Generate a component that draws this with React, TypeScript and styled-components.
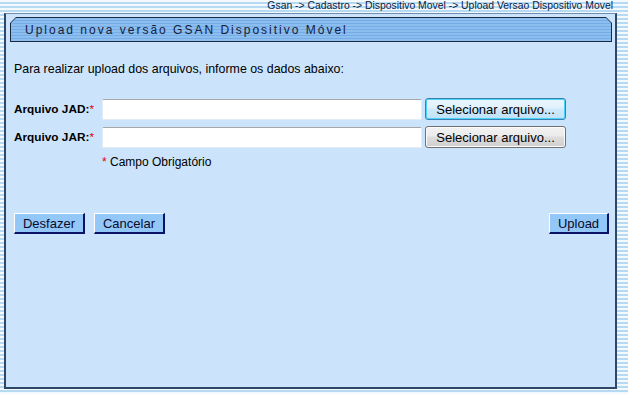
import React from "react";
import styled, { createGlobalStyle } from "styled-components";

const Global = createGlobalStyle`
  html, body { margin: 0; padding: 0; }
  body {
    width: 628px;
    height: 394px;
    overflow: hidden;
    font-family: "Liberation Sans", Arial, sans-serif;
  }
`;

const Page = styled.div`
  width: 628px;
  height: 394px;
  display: flex;
  flex-direction: column;
  background: repeating-linear-gradient(
    to bottom,
    #f4f9fd 0px,
    #f4f9fd 2px,
    #b6daf1 2px,
    #b6daf1 4px
  );
`;

const Breadcrumb = styled.div`
  height: 13px;
  padding-right: 15px;
  text-align: right;
  font-size: 10.4px;
  line-height: 11px;
  color: #0a1a44;
  white-space: nowrap;
`;

const Panel = styled.div`
  margin-left: 4px;
  width: 609px;
  height: 373px;
  background: #cbe4fc;
  border: 2px solid #2f4766;
  border-top: 1px solid #6f8db0;
  display: flex;
  flex-direction: column;
`;

const HeaderOuter = styled.div`
  margin: 3px 3px 0 4px;
  height: 25px;
  background: #1b2a3f;
  clip-path: polygon(6px 0, calc(100% - 6px) 0, 100% 6px, 100% 100%, 0 100%, 0 6px);
  padding: 1px;
  box-sizing: border-box;
`;

const HeaderInner = styled.div`
  height: 100%;
  clip-path: polygon(5px 0, calc(100% - 5px) 0, 100% 5px, 100% 100%, 0 100%, 0 5px);
  background: repeating-linear-gradient(
    to bottom,
    #8cbef0 0px,
    #8cbef0 2px,
    #76ace6 2px,
    #76ace6 3px
  );
  display: flex;
  align-items: center;
  padding-left: 14px;
  font-size: 12px;
  letter-spacing: 2px;
  color: #15203c;
  white-space: nowrap;
`;

const Content = styled.div`
  padding: 0 6px 0 8px;
  display: flex;
  flex-direction: column;
  flex: 1;
`;

const Intro = styled.div`
  margin-top: 20px;
  font-size: 12.4px;
  line-height: 14px;
  color: #000;
`;

const Form = styled.div`
  margin-top: 22px;
  display: grid;
  grid-template-columns: 85px 320px 141px;
  column-gap: 3px;
  row-gap: 6px;
  align-items: center;
`;

const Label = styled.div`
  font-size: 11.8px;
  font-weight: bold;
  color: #000;
  white-space: nowrap;
`;

const Star = styled.span`
  color: #e00000;
  font-weight: normal;
`;

const TextInput = styled.div`
  height: 21px;
  box-sizing: border-box;
  background: #fff;
  border: 1px solid #e4ebf2;
  border-top-color: #a6a6a6;
  border-radius: 2px;
`;

const FileButton = styled.button<{ $focused?: boolean }>`
  height: 22px;
  box-sizing: border-box;
  padding: 0;
  font-family: "Liberation Sans", Arial, sans-serif;
  font-size: 13px;
  color: #000;
  border-radius: 3px;
  border: 1px solid ${(p) => (p.$focused ? "#3c7fb1" : "#707070")};
  box-shadow: inset 0 0 0 1px ${(p) => (p.$focused ? "#48d3fb" : "#fcfcfc")};
  background: ${(p) =>
    p.$focused
      ? "linear-gradient(to bottom, #eaf6fd 0%, #e0f1fc 45%, #cfe9fb 50%, #bfe2fa 100%)"
      : "linear-gradient(to bottom, #f2f2f2 0%, #ebebeb 45%, #dddddd 50%, #cfcfcf 100%)"};
`;

const Note = styled.div`
  grid-column: 2 / span 2;
  margin-top: 1px;
  font-size: 12px;
  color: #000;
`;

const Actions = styled.div`
  margin-top: 44px;
  display: flex;
  align-items: center;
  gap: 9px;
`;

const Spacer = styled.div`
  flex: 1;
`;

const ActionButton = styled.button<{ $w: number }>`
  width: ${(p) => p.$w}px;
  height: 21px;
  box-sizing: border-box;
  padding: 0;
  font-family: "Liberation Sans", Arial, sans-serif;
  font-size: 13px;
  color: #0a0a2a;
  background: #92c7f8;
  border-style: solid;
  border-width: 1px 2px 2px 1px;
  border-color: #ffffff #0a1366 #0a1366 #ffffff;
`;

export default function App() {
  return (
    <Page>
      <Global />
      <Breadcrumb>
        Gsan -&gt; Cadastro -&gt; Dispositivo Movel -&gt; Upload Versao Dispositivo Movel
      </Breadcrumb>
      <Panel>
        <HeaderOuter>
          <HeaderInner>Upload nova versão GSAN Dispositivo Móvel</HeaderInner>
        </HeaderOuter>
        <Content>
          <Intro>Para realizar upload dos arquivos, informe os dados abaixo:</Intro>
          <Form>
            <Label>
              Arquivo JAD:<Star>*</Star>
            </Label>
            <TextInput />
            <FileButton $focused>Selecionar arquivo...</FileButton>
            <Label>
              Arquivo JAR:<Star>*</Star>
            </Label>
            <TextInput />
            <FileButton>Selecionar arquivo...</FileButton>
            <Note>
              <Star>*</Star> Campo Obrigatório
            </Note>
          </Form>
          <Actions>
            <ActionButton $w={71}>Desfazer</ActionButton>
            <ActionButton $w={71}>Cancelar</ActionButton>
            <Spacer />
            <ActionButton $w={60}>Upload</ActionButton>
          </Actions>
        </Content>
      </Panel>
    </Page>
  );
}
